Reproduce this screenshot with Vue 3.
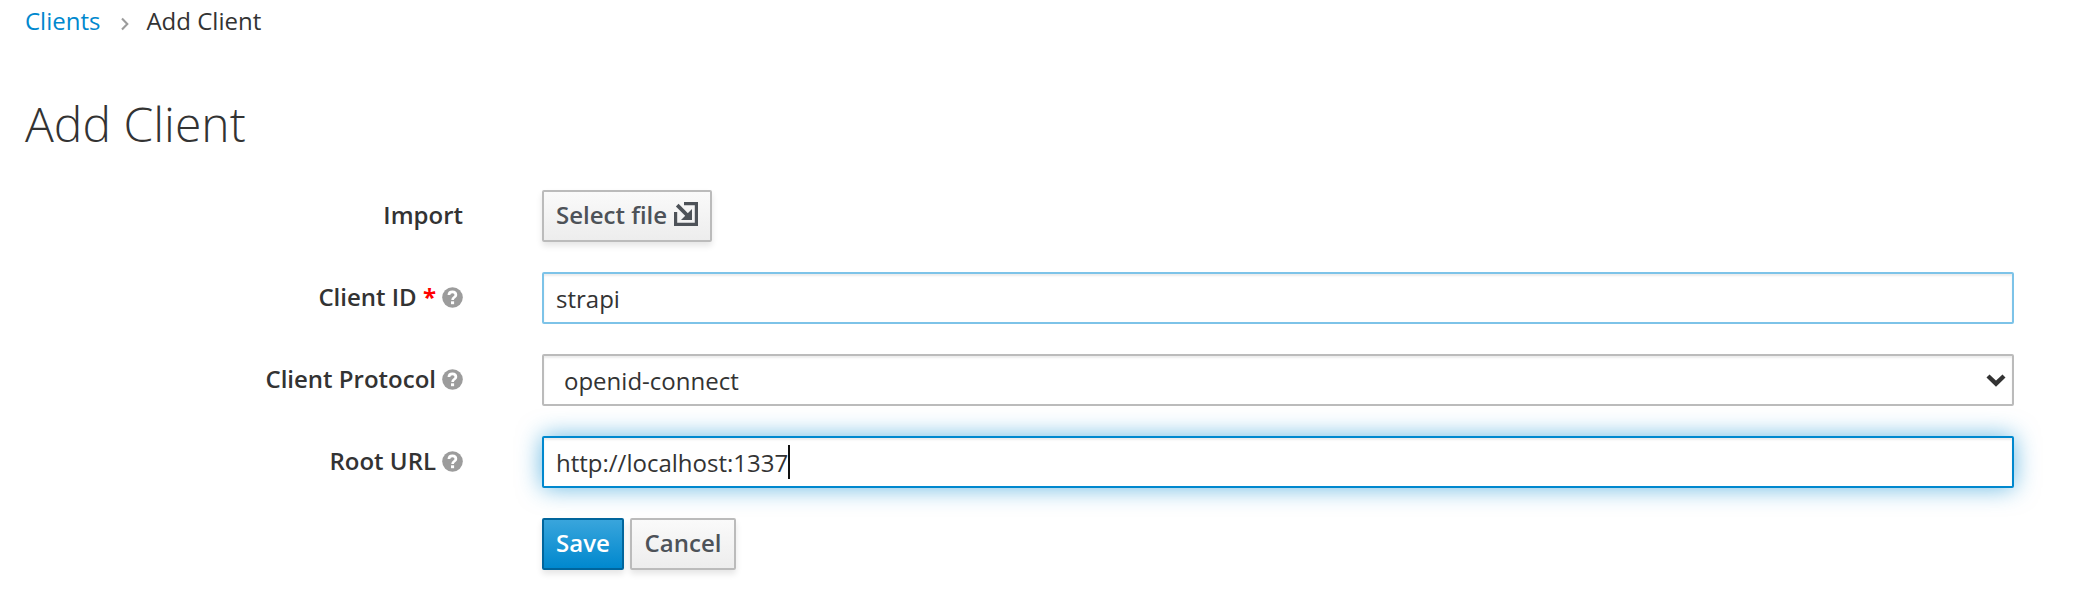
<script setup>
import { ref } from 'vue'

const clientId = ref('strapi')
const rootUrl = ref('http://localhost:1337')
</script>

<template>
  <main class="page">
    <nav class="breadcrumb">
      <a class="crumb-link">Clients</a>
      <svg class="crumb-sep" width="8" height="14" viewBox="0 0 8 14"><path d="M1 1.5 L6.3 7 L1 12.5" fill="none" stroke="#9c9c9c" stroke-width="2.1" /></svg>
      <span>Add Client</span>
    </nav>
    <h1 class="title">Add Client</h1>

    <form class="form">
      <div class="row">
        <span class="label">Import</span>
        <button type="button" class="btn btn-file">
          <span>Select file</span>
          <svg class="import-icon" width="24" height="24" viewBox="0 0 24 24">
            <path d="M10 1.6 H22.4 V22.4 H1.6 V10" fill="none" stroke="#4d5258" stroke-width="3.2" />
            <path d="M3.2 3.2 L14 14" fill="none" stroke="#4d5258" stroke-width="3.8" />
            <path d="M18 7 V18 H7 Z" fill="#4d5258" />
          </svg>
        </button>
      </div>

      <div class="row">
        <span class="label"><span>Client ID <b class="required">*</b></span>
          <svg class="help" width="21" height="21" viewBox="0 0 21 21"><circle cx="10.5" cy="10.5" r="10.3" fill="#9c9c9c" /><path d="M6.9 8 C7.1 3.7 13.9 4 13.9 7.9 C13.9 10.4 10.6 10.1 10.6 12.9" fill="none" stroke="#fff" stroke-width="2.7" /><rect x="9" y="14.3" width="3.1" height="2.9" fill="#fff" /></svg>
        </span>
        <div class="field field-hover">{{ clientId }}</div>
      </div>

      <div class="row">
        <span class="label"><span>Client Protocol</span>
          <svg class="help" width="21" height="21" viewBox="0 0 21 21"><circle cx="10.5" cy="10.5" r="10.3" fill="#9c9c9c" /><path d="M6.9 8 C7.1 3.7 13.9 4 13.9 7.9 C13.9 10.4 10.6 10.1 10.6 12.9" fill="none" stroke="#fff" stroke-width="2.7" /><rect x="9" y="14.3" width="3.1" height="2.9" fill="#fff" /></svg>
        </span>
        <div class="field field-select">
          <span>openid-connect</span>
          <svg width="20" height="13" viewBox="0 0 20 13"><path d="M2 2 L10 9.6 L18 2" fill="none" stroke="#333" stroke-width="4.4" /></svg>
        </div>
      </div>

      <div class="row">
        <span class="label"><span>Root URL</span>
          <svg class="help" width="21" height="21" viewBox="0 0 21 21"><circle cx="10.5" cy="10.5" r="10.3" fill="#9c9c9c" /><path d="M6.9 8 C7.1 3.7 13.9 4 13.9 7.9 C13.9 10.4 10.6 10.1 10.6 12.9" fill="none" stroke="#fff" stroke-width="2.7" /><rect x="9" y="14.3" width="3.1" height="2.9" fill="#fff" /></svg>
        </span>
        <div class="field field-focus">{{ rootUrl }}<i class="caret"></i></div>
      </div>

      <div class="row">
        <span class="label"></span>
        <div class="actions">
          <button type="button" class="btn btn-primary">Save</button>
          <button type="button" class="btn btn-cancel">Cancel</button>
        </div>
      </div>
    </form>
  </main>
</template>

<style>
html, body { background: #fff; overflow: hidden; }
</style>

<style scoped>
.page {
  box-sizing: border-box;
  width: 2092px;
  height: 608px;
  padding: 1px 78px 0 25px;
  color: #333;
  font: 400 24px/40px "Open Sans", sans-serif;
}
.breadcrumb { display: flex; align-items: center; height: 40px; }
.crumb-link { color: #0088ce; }
.crumb-sep { margin: 5px 17px 0 21px; }
.title {
  height: 52px;
  margin: 57px 0 40px;
  font-size: 48px;
  line-height: 52px;
  font-weight: 300;
}
.form { display: flex; flex-direction: column; gap: 30px; }
.row {
  display: grid;
  grid-template-columns: 438px 1472px;
  column-gap: 79px;
  height: 52px;
}
.label {
  display: flex;
  align-items: center;
  justify-content: flex-end;
  height: 50px;
  font-weight: 600;
  white-space: nowrap;
}
.required { color: #f00; font-weight: 700; }
.help { margin-left: 6px; }
.field {
  display: flex;
  align-items: center;
  box-sizing: border-box;
  height: 52px;
  padding: 1px 12px 0;
  border: 2px solid #bbb;
  border-radius: 2px;
  background: #fff;
  box-shadow: inset 0 2px 2px rgba(3, 3, 3, 0.075);
}
.field-hover { border-color: #7dc3e8; }
.field-select { justify-content: space-between; padding: 1px 6px 0 20px; }
.field-focus {
  border-color: #0088ce;
  box-shadow: inset 0 2px 2px rgba(3, 3, 3, 0.075), 0 0 24px rgba(0, 136, 206, 0.6);
}
.caret { width: 2px; height: 34px; background: #111; margin-top: -1px; }
.btn {
  display: flex;
  align-items: center;
  justify-content: center;
  box-sizing: border-box;
  height: 52px;
  padding: 0 0 2px;
  border: 2px solid #bbb;
  border-radius: 2px;
  background: linear-gradient(#fafafa, #ededed);
  box-shadow: 0 4px 6px rgba(3, 3, 3, 0.1);
  color: #4d5258;
  font: 600 24px/40px "Open Sans", sans-serif;
  white-space: nowrap;
}
.btn-file { width: 170px; justify-content: flex-start; padding-left: 12px; }
.import-icon { margin: -2px 0 0 7px; flex: none; }
.actions { display: flex; gap: 6px; }
.btn-primary {
  width: 82px;
  border-color: #00659c;
  background: linear-gradient(#39a5dc, #0088ce);
  color: #fff;
}
.btn-cancel { width: 106px; }
</style>
